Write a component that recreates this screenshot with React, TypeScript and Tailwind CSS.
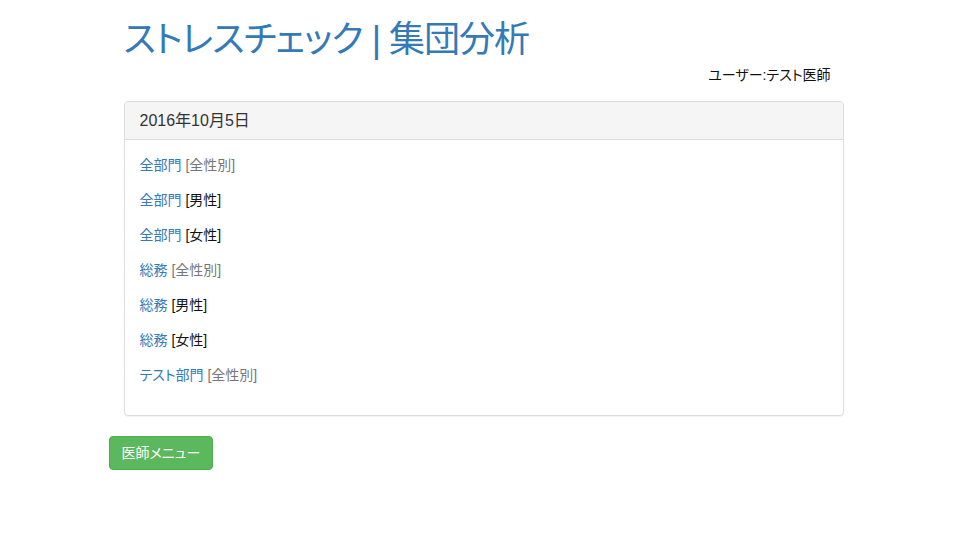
const groups = [
  { dept: "全部門", sex: "[全性別]", muted: true },
  { dept: "全部門", sex: "[男性]", muted: false },
  { dept: "全部門", sex: "[女性]", muted: false },
  { dept: "総務", sex: "[全性別]", muted: true },
  { dept: "総務", sex: "[男性]", muted: false },
  { dept: "総務", sex: "[女性]", muted: false },
  { dept: "テスト部門", sex: "[全性別]", muted: true },
]

export default function App() {
  return (
    <div
      className="min-h-[556px] bg-white text-[14px] leading-[20px] text-[#333] [font-feature-settings:'palt']"
      style={{ fontFamily: '"Liberation Sans", "Noto Sans CJK JP", sans-serif' }}
    >
      <div className="mx-auto w-[750px]">
        <div className="px-[15px]">
          <h1 className="mt-[20px] mb-[5px] text-[36px] leading-[1.1] font-normal tracking-[-1px] text-[#337ab7]">
            ストレスチェック | 集団分析
          </h1>
          <div className="mb-[16px] flex justify-end pr-[13px] text-[14px] text-[#111]">ユーザー:テスト医師</div>

          <div className="mb-[20px] rounded-[4px] border border-[#ddd] bg-white shadow-[0_1px_1px_rgba(0,0,0,0.05)]">
            <div className="rounded-t-[3px] border-b border-[#ddd] bg-[#f5f5f5] px-[15px] py-[10px]">
              <h3 className="text-[16px] leading-[1.1] text-[#333]">2016年10月5日</h3>
            </div>
            <div className="p-[15px]">
              {groups.map((g, i) => (
                <p key={i} className="mb-[15px]">
                  <a href="#" className="text-[#337ab7]">
                    {g.dept}
                  </a>{" "}
                  <span className={g.muted ? "text-[#777]" : "text-[#111]"}>{g.sex}</span>
                </p>
              ))}
            </div>
          </div>
        </div>

        <button className="rounded-[4px] border border-[#4cae4c] bg-[#5cb85c] px-[12px] py-[6px] text-[14px] leading-[20px] text-white">
          医師メニュー
        </button>
      </div>
    </div>
  )
}
